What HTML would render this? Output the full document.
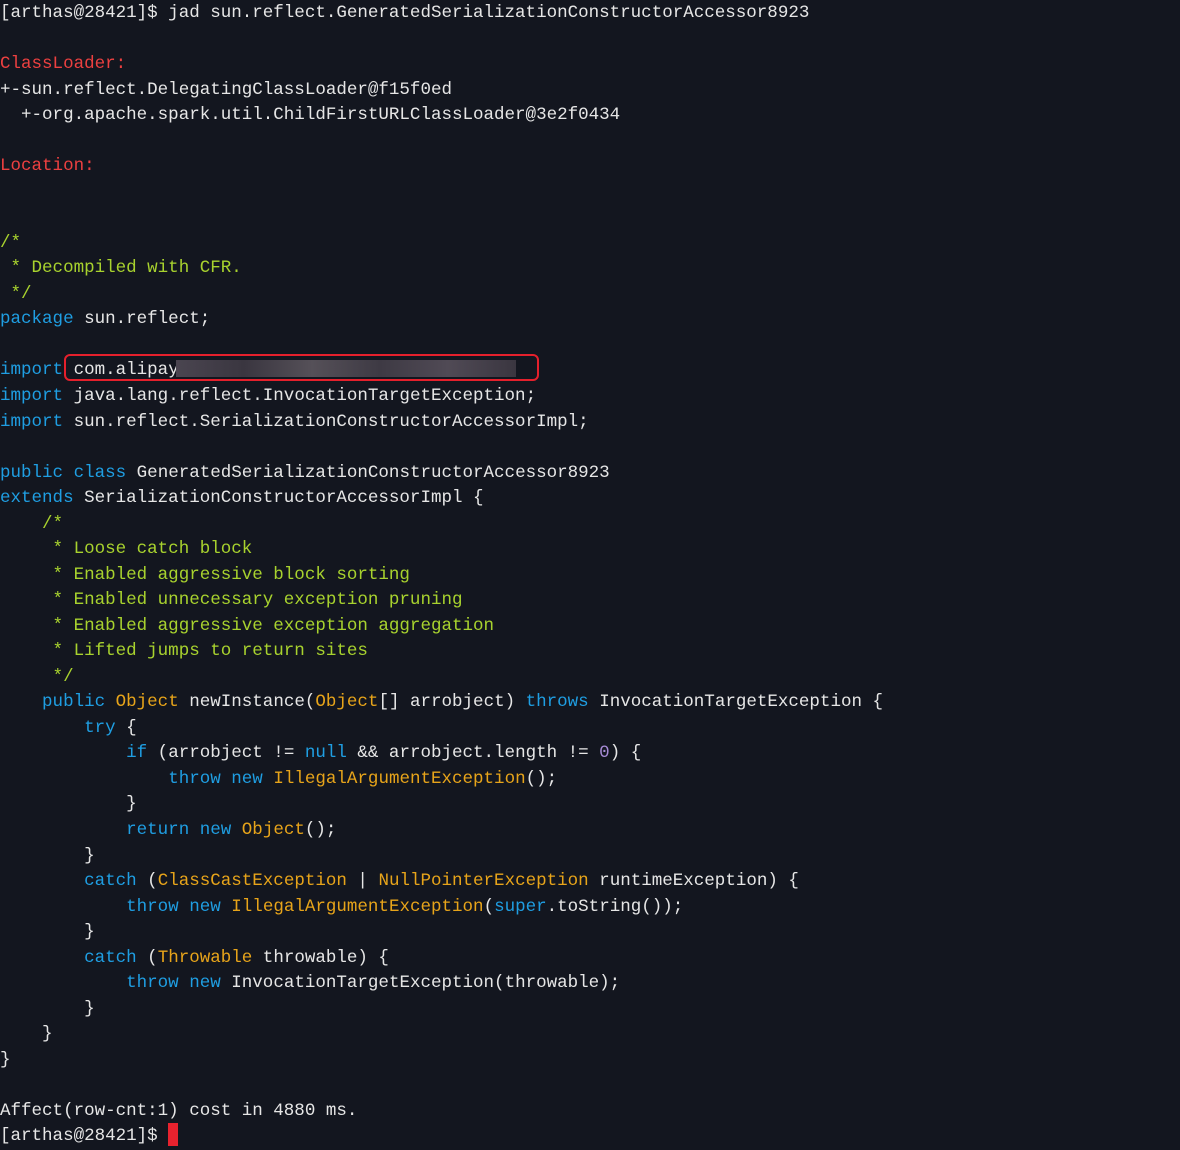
<!DOCTYPE html>
<html><head><meta charset="utf-8"><style>
html,body{margin:0;padding:0;background:#13161f;width:1180px;height:1150px;overflow:hidden}
pre{margin:0;position:absolute;left:0;top:1px;font-family:"Liberation Mono",monospace;font-size:17.53px;line-height:25.53px;color:#e6e6e6;white-space:pre}
.k{color:#1f9ee2}.o{color:#e7a41a}.c{color:#a8d22e}.r{color:#ec4040}.p{color:#a78bd6}
.box{position:absolute;left:64px;top:354px;width:471px;height:23px;border:2.5px solid #e5202c;border-radius:6px}
.blur{position:absolute;left:176px;top:360px;width:340px;height:17px;background:linear-gradient(90deg,#4a4550,#3a3640 20%,#555058 40%,#3e3a44 60%,#504a55 80%,#3a3640)}
.cur{position:absolute;left:168px;top:1123px;width:10px;height:23px;background:#e8222e}
</style></head><body>
<pre>[arthas@28421]$ jad sun.reflect.GeneratedSerializationConstructorAccessor8923

<span class="r">ClassLoader:</span>
+-sun.reflect.DelegatingClassLoader@f15f0ed
  +-org.apache.spark.util.ChildFirstURLClassLoader@3e2f0434

<span class="r">Location:</span>


<span class="c">/*
 * Decompiled with CFR.
 */</span>
<span class="k">package</span> sun.reflect;

<span class="k">import</span> com.alipay
<span class="k">import</span> java.lang.reflect.InvocationTargetException;
<span class="k">import</span> sun.reflect.SerializationConstructorAccessorImpl;

<span class="k">public</span> <span class="k">class</span> GeneratedSerializationConstructorAccessor8923
<span class="k">extends</span> SerializationConstructorAccessorImpl {
    <span class="c">/*
     * Loose catch block
     * Enabled aggressive block sorting
     * Enabled unnecessary exception pruning
     * Enabled aggressive exception aggregation
     * Lifted jumps to return sites
     */</span>
    <span class="k">public</span> <span class="o">Object</span> newInstance(<span class="o">Object</span>[] arrobject) <span class="k">throws</span> InvocationTargetException {
        <span class="k">try</span> {
            <span class="k">if</span> (arrobject != <span class="k">null</span> &amp;&amp; arrobject.length != <span class="p">0</span>) {
                <span class="k">throw</span> <span class="k">new</span> <span class="o">IllegalArgumentException</span>();
            }
            <span class="k">return</span> <span class="k">new</span> <span class="o">Object</span>();
        }
        <span class="k">catch</span> (<span class="o">ClassCastException</span> | <span class="o">NullPointerException</span> runtimeException) {
            <span class="k">throw</span> <span class="k">new</span> <span class="o">IllegalArgumentException</span>(<span class="k">super</span>.toString());
        }
        <span class="k">catch</span> (<span class="o">Throwable</span> throwable) {
            <span class="k">throw</span> <span class="k">new</span> InvocationTargetException(throwable);
        }
    }
}

Affect(row-cnt:1) cost in 4880 ms.
[arthas@28421]$ </pre>
<div class="blur"></div>
<div class="box"></div>
<div class="cur"></div>
</body></html>
